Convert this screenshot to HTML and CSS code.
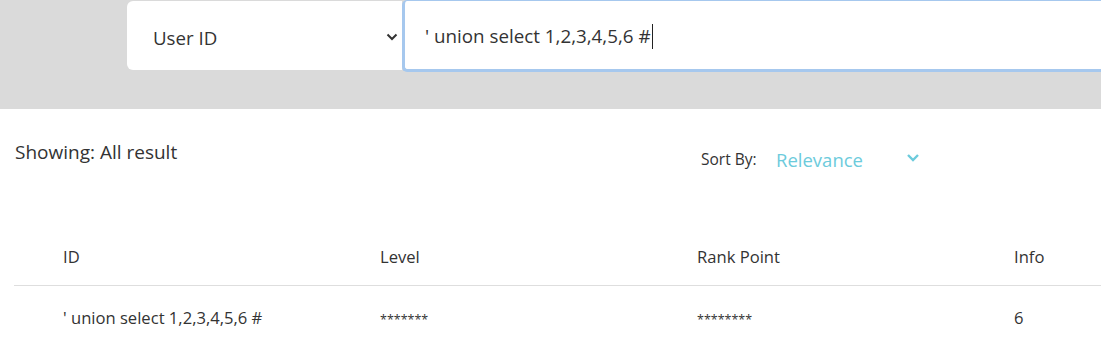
FILE: index.html
```html
<!DOCTYPE html>
<html>
<head>
  <meta charset="utf-8">
  <link rel="stylesheet" href="styles.css">
</head>
<body>
<div class="search-band">
  <div class="search-bar">
    <div class="search-type">
      <span>User ID</span>
      <svg class="chev" width="12" height="8" viewBox="0 0 12 8"><path d="M1.5 1.5 L6 6 L10.5 1.5" fill="none" stroke="#333" stroke-width="2"/></svg>
    </div>
    <div class="search-input"><span>' union select 1,2,3,4,5,6 #</span><span class="caret"></span></div>
  </div>
</div>

<div class="results-head">
  <div class="showing">Showing: All result</div>
  <div class="sort">
    <span class="sort-label">Sort By:</span>
    <span class="sort-value">Relevance</span>
    <svg class="sort-chev" width="14" height="9" viewBox="0 0 14 9"><path d="M2 2 L7 7 L12 2" fill="none" stroke="#6ccbdc" stroke-width="2.4"/></svg>
  </div>
</div>

<div class="table-wrap">
  <table class="results">
    <thead>
      <tr><th>ID</th><th>Level</th><th>Rank Point</th><th>Info</th></tr>
    </thead>
    <tbody>
      <tr><td>' union select 1,2,3,4,5,6 #</td><td class="stars">*******</td><td class="stars">********</td><td>6</td></tr>
    </tbody>
  </table>
</div>
</body>
</html>
```

FILE: styles.css
```css
body{
  margin:0;
  font-family:"Open Sans", "Noto Sans", sans-serif;
  color:#333;
  background:#fff;
  overflow:hidden;
}
.search-band{
  background:#dadada;
  height:109px;
  padding-left:127px;
}
.search-bar{
  display:flex;
  height:72px;
}
.search-type{
  width:275px;
  height:69px;
  margin-top:1px;
  background:#fff;
  border-radius:6px 0 0 6px;
  display:flex;
  align-items:center;
  justify-content:space-between;
  padding:3px 4px 0 26px;
  box-sizing:border-box;
  font-size:18.7px;
  color:#333;
}
.search-input{
  flex:1;
  height:72px;
  box-sizing:border-box;
  background:#fff;
  border:3px solid #a6c8ee;
  border-top-width:1px;
  border-right:none;
  border-radius:5px 0 0 5px;
  display:flex;
  align-items:center;
  padding:2px 0 0 20px;
  font-size:18.8px;
  color:#333;
}
.caret{
  display:inline-block;
  width:1px;
  height:25px;
  background:#222;
  margin-left:1px;
}
.results-head{
  display:flex;
  padding:30px 0 0 15px;
  height:80px;
  box-sizing:border-box;
}
.showing{
  font-size:19px;
  width:686px;
}
.sort{
  display:flex;
  align-items:center;
  height:40px;
}
.sort-label{
  font-size:15.5px;
  color:#333;
  width:75px;
}
.sort-value{
  font-size:18.5px;
  color:#6ccbdc;
  width:130px;
}
.sort-chev{
  margin-top:-4px;
}
.table-wrap{
  padding:40px 0 0 14px;
}
.results{
  border-collapse:collapse;
  width:1268px;
  table-layout:fixed;
  font-size:16.6px;
}
.results th,
.results td{
  box-sizing:border-box;
  text-align:left;
  font-weight:normal;
  padding:0 0 0 49px;
  width:317px;
}
.results th{
  height:56px;
  border-bottom:1px solid #dedede;
}
.results td{
  height:64px;
}
.results td.stars{
  font-size:12.5px;
  padding-top:4px;
}
```
